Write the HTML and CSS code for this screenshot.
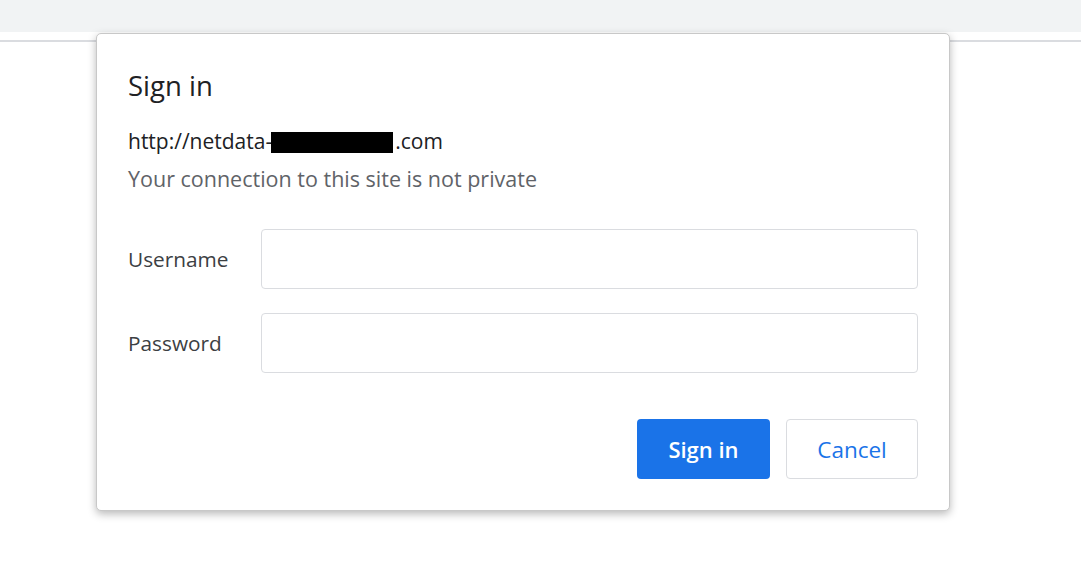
FILE: index.html
```html
<!DOCTYPE html>
<html lang="en">
<head>
  <meta charset="UTF-8" />
  <title>Sign in</title>
  <link rel="stylesheet" href="styles.css">
</head>
<body>

  <div class="toolbar"></div>
  <div class="page"></div>

  <div class="dialog">
    <h1 class="dialog-title">Sign in</h1>
    <p class="origin">http://netdata-<span class="redacted"></span>.com</p>
    <p class="warning">Your connection to this site is not private</p>

    <div class="form">
      <label for="username">Username</label>
      <input type="text" id="username" />

      <label for="password">Password</label>
      <input type="password" id="password" />
    </div>

    <div class="actions">
      <button class="btn btn-primary">Sign in</button>
      <button class="btn btn-secondary">Cancel</button>
    </div>
  </div>

</body>
</html>
```

FILE: styles.css
```css
body {
  margin: 0;
  font-family: "Open Sans", "Noto Sans", Arial, sans-serif;
  background: #fff;
  width: 1081px;
  height: 579px;
  overflow: hidden;
}

.toolbar {
  height: 32px;
  background-color: #f1f3f4;
}

.page {
  height: 537px;
  margin-top: 8px;
  border-top: 2px solid #dadce0;
}

.dialog {
  position: absolute;
  left: 96px;
  top: 33px;
  width: 854px;
  height: 478px;
  box-sizing: border-box;
  padding: 34px 31px 0 31px;
  background: #fff;
  border: 1px solid #c8c8c8;
  border-radius: 5px;
  box-shadow: 0 3px 8px rgba(0, 0, 0, 0.28);
}

.dialog-title {
  margin: 0;
  font-size: 27.5px;
  font-weight: normal;
  line-height: 36px;
  color: #202124;
}

.origin {
  margin: 22px 0 0 0;
  font-size: 21px;
  line-height: 30px;
  color: #202124;
}

.redacted {
  display: inline-block;
  width: 122px;
  height: 21px;
  margin-left: -1px;
  margin-right: 2px;
  vertical-align: -4px;
  background: #000;
}

.warning {
  margin: 8px 0 0 0;
  font-size: 21.5px;
  line-height: 30px;
  color: #5f6368;
}

.form {
  display: grid;
  grid-template-columns: 133px 1fr;
  row-gap: 24px;
  align-items: center;
  margin-top: 35px;
}

.form label {
  font-size: 20.8px;
  color: #3c4043;
}

.form input {
  height: 60px;
  box-sizing: border-box;
  border: 1px solid #dadce0;
  border-radius: 4px;
  padding: 0 12px;
  font-size: 20px;
  font-family: inherit;
}

.actions {
  display: flex;
  justify-content: flex-end;
  gap: 16px;
  margin-top: 46px;
}

.btn {
  height: 60px;
  width: 133px;
  border-radius: 4px;
  font-family: inherit;
  font-size: 22px;
  font-weight: 600;
  cursor: pointer;
}

.btn-primary {
  background-color: #1a73e8;
  color: #fff;
  border: none;
}

.btn-secondary {
  width: 132px;
  background-color: #fff;
  color: #1a73e8;
  border: 1px solid #dadce0;
  font-size: 22.5px;
  font-weight: 500;
}
```
